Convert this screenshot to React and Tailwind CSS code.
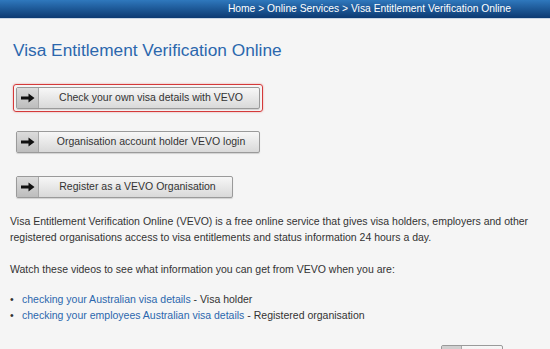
import React from 'react';

const Arrow = () => (
  <svg width="14" height="10" viewBox="0 0 14 10">
    <path d="M0 3.5h7.5V0.5L13.5 5l-6 4.5V6.5H0z" fill="#111" />
  </svg>
);

const VevoButton = ({ label, width, focused }) => {
  const btn = (
    <div
      className={`flex h-[22px] border border-[#9a9a9a] rounded-[2px] bg-gradient-to-b from-[#f7f7f7] to-[#d9d9d9] shadow-[0_1px_1px_rgba(0,0,0,0.15)] ${width}`}
    >
      <div className="w-[22px] flex items-center justify-center border-r border-[#a8a8a8] bg-gradient-to-b from-[#dcdcdc] to-[#bdbdbd]">
        <Arrow />
      </div>
      <div className="flex-1 flex items-center justify-center text-[10.5px] text-[#333] pl-1">{label}</div>
    </div>
  );
  if (focused) {
    return (
      <div className="inline-block p-[2px] border border-[#d43a3a] rounded-[3px] shadow-[0_0_2px_rgba(220,60,60,0.5)] ml-[-3px]">
        {btn}
      </div>
    );
  }
  return btn;
};

export default function App() {
  return (
    <div className="w-[550px] h-[349px] overflow-hidden bg-[#f5f5f5] font-['Liberation_Sans',Arial,sans-serif]">
      <div className="h-[19px] bg-gradient-to-b from-[#2f78bd] to-[#0c3a72] border-b border-[#c9d6e4] flex items-center justify-end pr-[39px]">
        <span className="text-white text-[10.3px]">
          Home &gt; Online Services &gt; Visa Entitlement Verification Online
        </span>
      </div>
      <div className="px-[10px]">
        <h1 className="pl-[3px] mt-[19px] text-[17.3px] text-[#2b67ad] leading-[24px]">Visa Entitlement Verification Online</h1>
        <div className="pl-[6px] mt-[22px] flex flex-col items-start">
          <VevoButton label="Check your own visa details with VEVO" width="w-[244px]" focused />
          <div className="mt-[19px]">
            <VevoButton label="Organisation account holder VEVO login" width="w-[244px]" />
          </div>
          <div className="mt-[23px]">
            <VevoButton label="Register as a VEVO Organisation" width="w-[217px]" />
          </div>
        </div>
        <p className="mt-[15px] text-[10.5px] leading-[16px] text-[#333]">
          Visa Entitlement Verification Online (VEVO) is a free online service that gives visa holders, employers and other registered organisations access to visa entitlements and status information 24 hours a day.
        </p>
        <p className="mt-[16px] text-[10.5px] leading-[16px] text-[#333]">
          Watch these videos to see what information you can get from VEVO when you are:
        </p>
        <ul className="mt-[14px] text-[10.5px] leading-[16px] text-[#333]">
          <li className="flex">
            <span className="w-[12px]">•</span>
            <span><span className="text-[#2b67ad]">checking your Australian visa details</span> - Visa holder</span>
          </li>
          <li className="flex">
            <span className="w-[12px]">•</span>
            <span><span className="text-[#2b67ad]">checking your employees Australian visa details</span> - Registered organisation</span>
          </li>
        </ul>
        <div className="mt-[22px] flex justify-end pr-[37px]">
          <div className="flex w-[62px] h-[22px] border border-[#9a9a9a] rounded-[2px] bg-gradient-to-b from-[#f7f7f7] to-[#d9d9d9]">
            <div className="w-[20px] border-r border-[#a8a8a8] bg-[#cfcfcf]" />
          </div>
        </div>
      </div>
    </div>
  );
}
